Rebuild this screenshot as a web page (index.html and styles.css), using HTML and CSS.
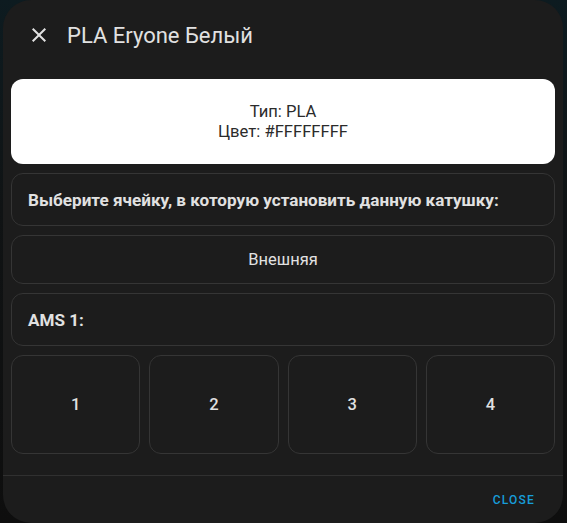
FILE: index.html
```html
<!DOCTYPE html>
<html lang="ru">
<head>
<meta charset="utf-8">
<link rel="stylesheet" href="styles.css">
</head>
<body>
<div class="dialog">
  <header class="header">
    <button class="icon-btn" aria-label="close">
      <svg viewBox="0 0 24 24" width="24" height="24"><path fill="currentColor" d="M19,6.41L17.59,5L12,10.59L6.41,5L5,6.41L10.59,12L5,17.59L6.41,19L12,13.41L17.59,19L19,17.59L13.41,12L19,6.41Z"/></svg>
    </button>
    <h2 class="title">PLA Eryone Белый</h2>
  </header>
  <main class="content">
    <div class="info-card">
      <div>Тип: PLA</div>
      <div>Цвет: #FFFFFFFF</div>
    </div>
    <div class="card card-label">Выберите ячейку, в которую установить данную катушку:</div>
    <div class="card card-button">Внешняя</div>
    <div class="card card-label">AMS 1:</div>
    <div class="slots">
      <div class="card slot">1</div>
      <div class="card slot">2</div>
      <div class="card slot">3</div>
      <div class="card slot">4</div>
    </div>
  </main>
  <footer class="footer">
    <button class="text-btn">Close</button>
  </footer>
</div>
</body>
</html>
```

FILE: styles.css
```css
html, body {
  margin: 0;
  padding: 0;
  height: 523px;
  overflow: hidden;
}
body {
  background: linear-gradient(180deg, #0d1b20 0%, #101314 40%, #0e0e0e 100%);
  font-family: Roboto, "Noto Sans", sans-serif;
  color: #e1e1e1;
}
.dialog {
  box-sizing: border-box;
  margin: 0 4px 0 3px;
  width: 560px;
  height: 523px;
  background: #1c1c1c;
  border-radius: 28px;
  display: flex;
  flex-direction: column;
  overflow: hidden;
}
.header {
  display: flex;
  align-items: center;
  height: 70px;
  padding: 0 0 0 24px;
  flex: none;
}
.icon-btn {
  background: none;
  border: 0;
  padding: 0;
  width: 24px;
  height: 24px;
  color: #e1e1e1;
  display: flex;
  align-items: center;
  justify-content: center;
}
.title {
  margin: 0 0 0 16px;
  font-size: 22px;
  font-weight: 400;
  color: #e1e1e1;
}
.content {
  flex: 1;
  padding: 9px 8px 20px;
  display: flex;
  flex-direction: column;
  gap: 9px;
}
.info-card {
  background: #ffffff;
  color: #2b2b2b;
  border-radius: 12px;
  height: 85px;
  display: flex;
  flex-direction: column;
  justify-content: center;
  align-items: center;
  font-size: 16.6px;
  line-height: 20px;
}
.card {
  box-sizing: border-box;
  border: 1px solid #353535;
  border-radius: 12px;
  background: #1c1c1c;
  font-size: 16.5px;
}
.card-label {
  height: 53px;
  padding: 0 16px;
  display: flex;
  align-items: center;
  font-weight: 700;
  font-size: 17.1px;
}
.card-button {
  height: 49px;
  display: flex;
  align-items: center;
  justify-content: center;
}
.slots {
  display: grid;
  grid-template-columns: repeat(4, 1fr);
  gap: 9px;
}
.slot {
  height: 99px;
  display: flex;
  align-items: center;
  justify-content: center;
  font-weight: 500;
}
.footer {
  flex: none;
  height: 47px;
  border-top: 1px solid #303030;
  display: flex;
  justify-content: flex-end;
  align-items: center;
  padding: 0 20px 0 0;
}
.text-btn {
  background: none;
  border: 0;
  padding: 6px 8px;
  font-family: Roboto, sans-serif;
  font-size: 12px;
  font-weight: 500;
  letter-spacing: 1.2px;
  text-transform: uppercase;
  color: #179dd9;
}
```
